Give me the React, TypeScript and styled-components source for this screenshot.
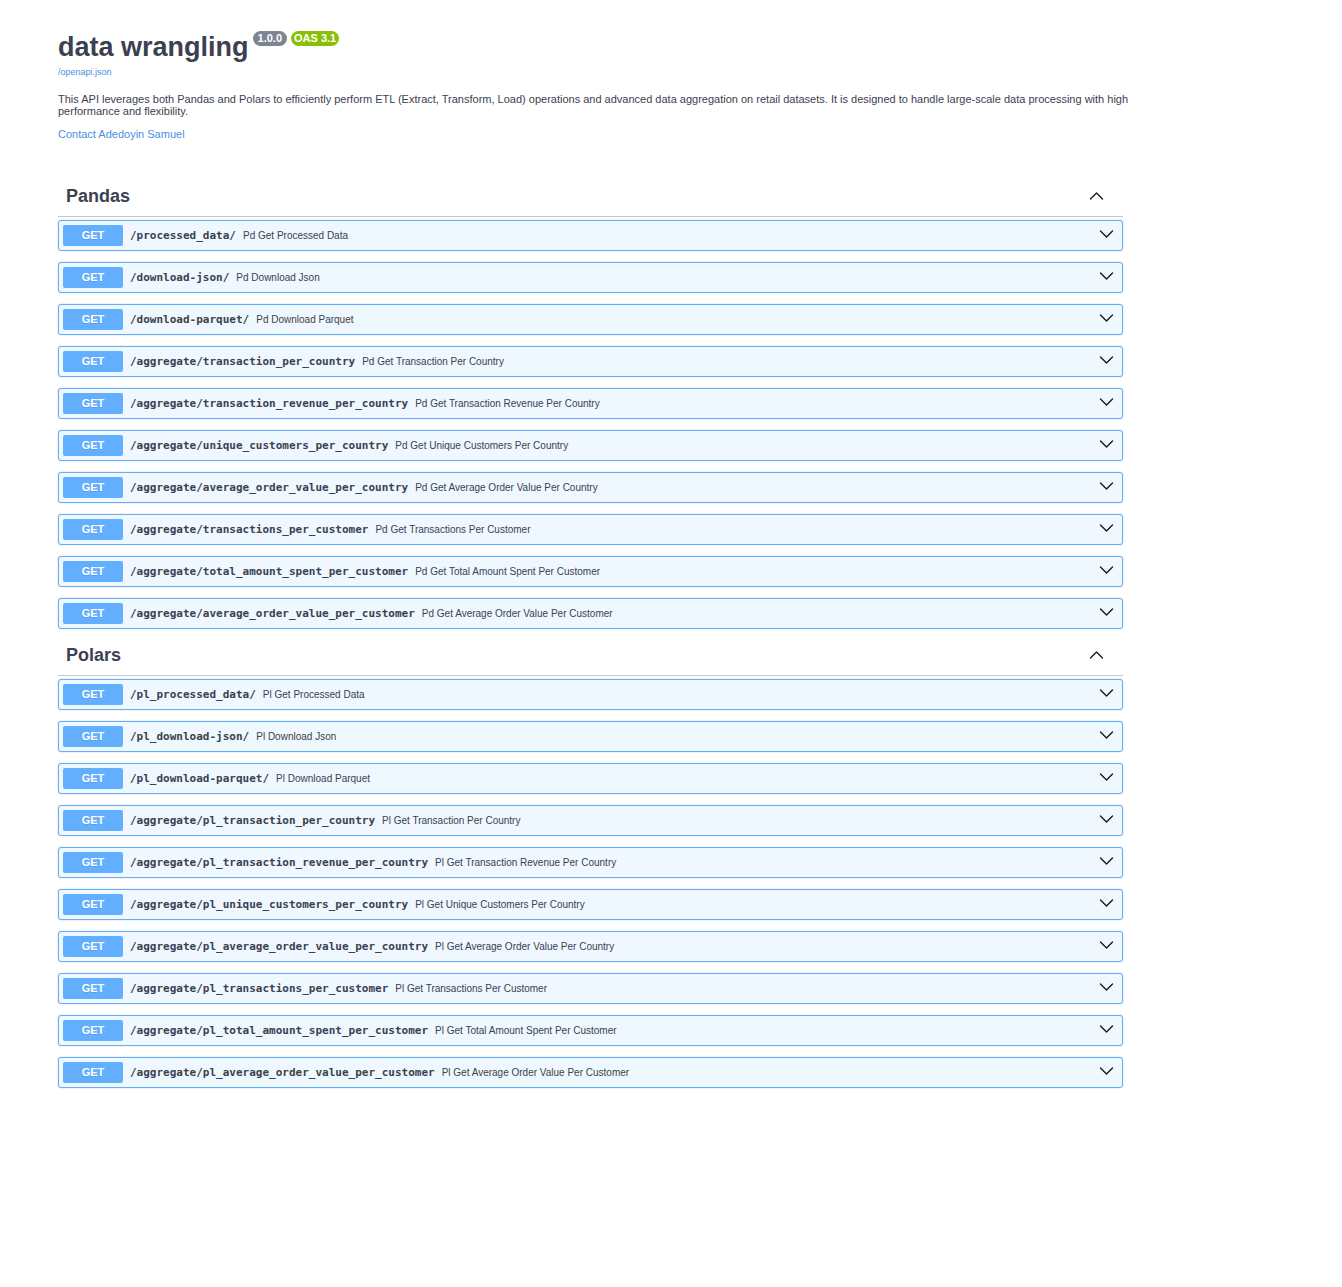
import { useState } from "react";
import styled, { createGlobalStyle } from "styled-components";

const GlobalStyle = createGlobalStyle`
  *, *::before, *::after { box-sizing: border-box; }
  body {
    margin: 0;
    background: #fff;
    color: #3b4151;
    font-family: Arial, "Liberation Sans", sans-serif;
  }
`;

const Page = styled.main`
  max-width: 1095px;
  margin-left: 43px;
  padding: 30px 15px 60px;
`;

const Info = styled.header`
  margin-right: -10px;
`;

const TitleRow = styled.div`
  display: flex;
  align-items: flex-start;
  gap: 4px;
`;

const Title = styled.h1`
  margin: 0;
  font-size: 27px;
  line-height: 35px;
  font-weight: 700;
`;

const Badge = styled.span<{ $color: string }>`
  margin-top: 1px;
  padding: 0 5px;
  border-radius: 8px;
  background: ${(p) => p.$color};
  color: #fff;
  font-size: 11px;
  line-height: 15px;
  font-weight: 700;

  & + & {
    padding: 0 3px;
  }
`;

const Link = styled.a<{ $small?: boolean }>`
  display: block;
  width: fit-content;
  color: #4990e2;
  font-size: ${(p) => (p.$small ? 9 : 11)}px;
  line-height: 14px;
  text-decoration: none;

  &:hover {
    text-decoration: underline;
  }
`;

const Description = styled.p`
  margin: 14px 0 10px;
  font-size: 11px;
  line-height: 12px;
`;

const Sections = styled.div`
  display: flex;
  flex-direction: column;
  gap: 7px;
  margin-top: 36px;
`;

const SectionHeader = styled.h2`
  margin: 0 0 3px;
  border-bottom: 1px solid rgba(59, 65, 81, 0.3);
`;

const SectionToggle = styled.button`
  display: flex;
  align-items: center;
  justify-content: space-between;
  width: 100%;
  height: 39px;
  padding: 0 19px 0 8px;
  border: 0;
  background: none;
  color: inherit;
  font: inherit;
  font-size: 18px;
  cursor: pointer;
`;

const Operations = styled.ul`
  display: flex;
  flex-direction: column;
  gap: 11px;
  margin: 0;
  padding: 0;
  list-style: none;
`;

const Operation = styled.button`
  display: flex;
  align-items: center;
  gap: 7px;
  width: 100%;
  padding: 4px 8px 4px 4px;
  border: 1px solid #61affe;
  border-radius: 3px;
  background: #eff7ff;
  box-shadow: 0 0 2px rgba(0, 0, 0, 0.19);
  color: inherit;
  font: inherit;
  text-align: left;
  cursor: pointer;
`;

const Method = styled.span`
  width: 60px;
  border-radius: 2px;
  background: #61affe;
  color: #fff;
  font-size: 11px;
  line-height: 21px;
  font-weight: 700;
  text-align: center;
  text-shadow: 0 1px 0 rgba(0, 0, 0, 0.1);
`;

const Path = styled.span`
  font-family: "DejaVu Sans Mono", monospace;
  font-size: 11px;
  font-weight: 700;
  white-space: nowrap;
`;

const Summary = styled.span`
  flex: 1;
  font-size: 10px;
`;

const Icon = styled.svg`
  display: block;
  flex: none;
  width: 15px;
  height: 15px;
  fill: none;
  stroke: #1b1b1f;
  stroke-width: 1.4;
  stroke-linecap: round;
  stroke-linejoin: round;
`;

const Chevron = ({ up = false }: { up?: boolean }) => (
  <Icon viewBox="0 0 15 15" aria-hidden="true">
    <path d={up ? "M1.5 10 7.5 4l6 6" : "M1.5 3 7.5 9l6-6"} />
  </Icon>
);

type Endpoint = [path: string, summary: string];

const sections: { name: string; endpoints: Endpoint[] }[] = [
  {
    name: "Pandas",
    endpoints: [
      ["/processed_data/", "Pd Get Processed Data"],
      ["/download-json/", "Pd Download Json"],
      ["/download-parquet/", "Pd Download Parquet"],
      ["/aggregate/transaction_per_country", "Pd Get Transaction Per Country"],
      ["/aggregate/transaction_revenue_per_country", "Pd Get Transaction Revenue Per Country"],
      ["/aggregate/unique_customers_per_country", "Pd Get Unique Customers Per Country"],
      ["/aggregate/average_order_value_per_country", "Pd Get Average Order Value Per Country"],
      ["/aggregate/transactions_per_customer", "Pd Get Transactions Per Customer"],
      ["/aggregate/total_amount_spent_per_customer", "Pd Get Total Amount Spent Per Customer"],
      ["/aggregate/average_order_value_per_customer", "Pd Get Average Order Value Per Customer"],
    ],
  },
  {
    name: "Polars",
    endpoints: [
      ["/pl_processed_data/", "Pl Get Processed Data"],
      ["/pl_download-json/", "Pl Download Json"],
      ["/pl_download-parquet/", "Pl Download Parquet"],
      ["/aggregate/pl_transaction_per_country", "Pl Get Transaction Per Country"],
      ["/aggregate/pl_transaction_revenue_per_country", "Pl Get Transaction Revenue Per Country"],
      ["/aggregate/pl_unique_customers_per_country", "Pl Get Unique Customers Per Country"],
      ["/aggregate/pl_average_order_value_per_country", "Pl Get Average Order Value Per Country"],
      ["/aggregate/pl_transactions_per_customer", "Pl Get Transactions Per Customer"],
      ["/aggregate/pl_total_amount_spent_per_customer", "Pl Get Total Amount Spent Per Customer"],
      ["/aggregate/pl_average_order_value_per_customer", "Pl Get Average Order Value Per Customer"],
    ],
  },
];

function TagSection({ name, endpoints }: { name: string; endpoints: Endpoint[] }) {
  const [open, setOpen] = useState(true);
  return (
    <section>
      <SectionHeader>
        <SectionToggle type="button" aria-expanded={open} onClick={() => setOpen(!open)}>
          {name}
          <Chevron up={open} />
        </SectionToggle>
      </SectionHeader>
      {open && (
        <Operations>
          {endpoints.map(([path, summary]) => (
            <li key={path}>
              <Operation type="button" aria-expanded={false}>
                <Method>GET</Method>
                <Path>{path}</Path>
                <Summary>{summary}</Summary>
                <Chevron />
              </Operation>
            </li>
          ))}
        </Operations>
      )}
    </section>
  );
}

export default function App() {
  return (
    <>
      <GlobalStyle />
      <Page>
        <Info>
          <TitleRow>
            <Title>data wrangling</Title>
            <Badge $color="#7d8492">1.0.0</Badge>
            <Badge $color="#89bf04">OAS 3.1</Badge>
          </TitleRow>
          <Link $small href="/openapi.json">/openapi.json</Link>
          <Description>
            This API leverages both Pandas and Polars to efficiently perform ETL (Extract, Transform, Load) operations
            and advanced data aggregation on retail datasets. It is designed to handle large-scale data processing with
            high performance and flexibility.
          </Description>
          <Link href="#contact">Contact Adedoyin Samuel</Link>
        </Info>
        <Sections>
          {sections.map((section) => (
            <TagSection key={section.name} {...section} />
          ))}
        </Sections>
      </Page>
    </>
  );
}
